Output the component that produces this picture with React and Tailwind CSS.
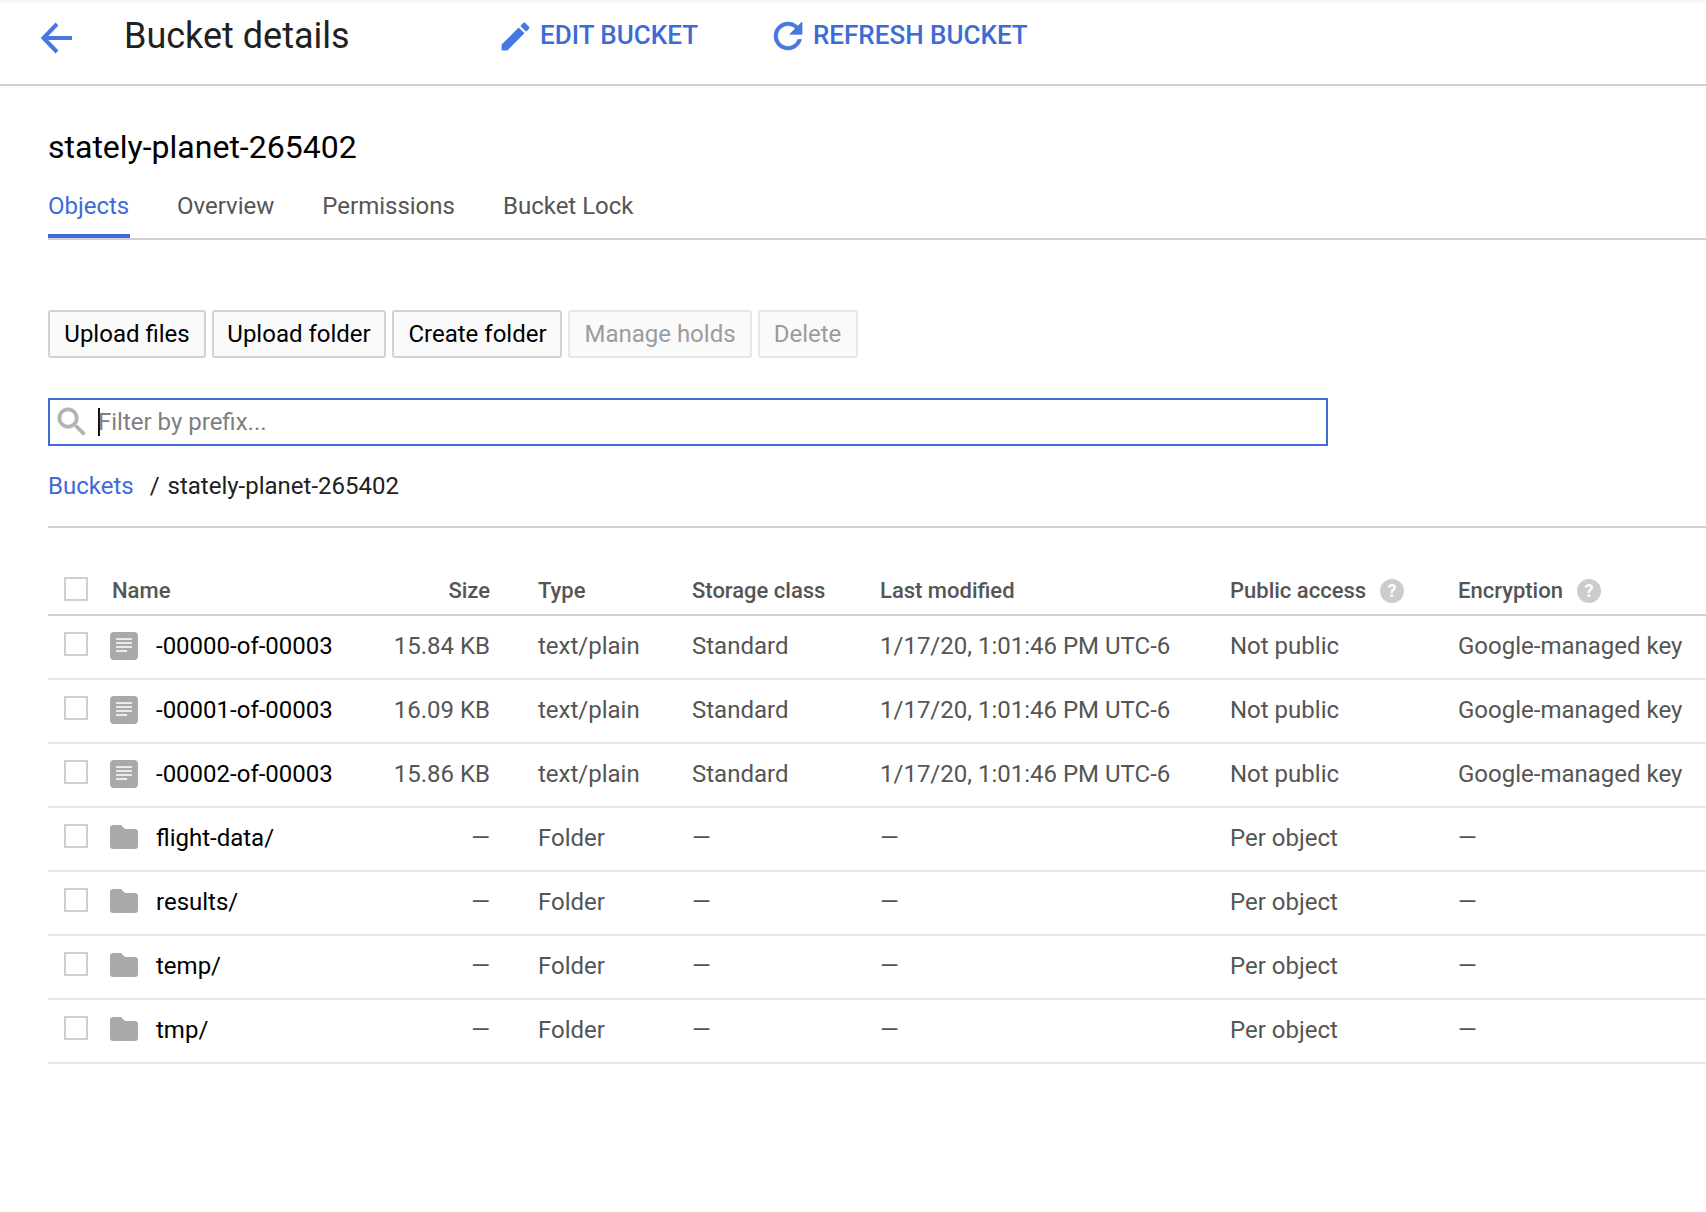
import React from "react";

const Pencil = () => (
  <svg viewBox="0 0 24 24" className="w-[37px] h-[37px] shrink-0" fill="#4678e0">
    <path d="M3 17.25V21h3.75L17.81 9.94l-3.75-3.75L3 17.25zM20.71 7.04a1 1 0 0 0 0-1.41l-2.34-2.34a1 1 0 0 0-1.41 0l-1.83 1.83 3.75 3.75 1.83-1.83z" />
  </svg>
);
const Refresh = () => (
  <svg viewBox="0 0 24 24" className="w-[42px] h-[42px] shrink-0" fill="#4678e0" stroke="#4678e0" strokeWidth="0.4">
    <path d="M17.65 6.35A7.95 7.95 0 0 0 12 4a8 8 0 1 0 7.73 10h-2.08A6 6 0 1 1 12 6c1.66 0 3.14.69 4.22 1.78L13 11h7V4l-2.35 2.35z" />
  </svg>
);
const Back = () => (
  <svg viewBox="0 0 34 34" className="w-[34px] h-[34px] mt-[4px] shrink-0" fill="none" stroke="#4678e0" strokeWidth="4">
    <path d="M32 17H4M17 3 3.5 17 17 31" />
  </svg>
);
const Search = () => (
  <svg viewBox="0 0 24 24" className="w-[38px] h-[38px] shrink-0" fill="#b2b2b2" stroke="#b2b2b2" strokeWidth="0.4">
    <path d="M15.5 14h-.79l-.28-.27A6.47 6.47 0 0 0 16 9.5 6.5 6.5 0 1 0 9.5 16c1.61 0 3.09-.59 4.23-1.57l.27.28v.79l5 4.99L20.49 19l-4.99-5zm-6 0A4.5 4.5 0 1 1 14 9.5 4.49 4.49 0 0 1 9.5 14z" />
  </svg>
);
const FileIcon = () => (
  <svg viewBox="0 0 28 28" className="w-[28px] h-[28px] block">
    <rect width="28" height="28" rx="4" fill="#a9a9a9" />
    <path d="M6 7h16M6 11h16M6 15h16M6 19h11" stroke="#fff" strokeWidth="1.5" />
  </svg>
);
const FolderIcon = () => (
  <svg viewBox="0 0 28 24" className="w-[28px] h-[24px] block -mt-[2px]">
    <path d="M3 0h8l4 4h10a3 3 0 0 1 3 3v14a3 3 0 0 1-3 3H3a3 3 0 0 1-3-3V3a3 3 0 0 1 3-3z" fill="#a9a9a9" />
  </svg>
);
const Help = () => (
  <span className="ml-[14px] w-[24px] h-[24px] rounded-full bg-[#cccccc] text-white text-[18px] font-bold leading-[24px] text-center inline-block">?</span>
);
const Check = () => <span className="block w-[24px] h-[24px] border-2 border-[#d0d0d0] bg-white" />;

const cols = "grid grid-cols-[62px_260px_120px_202px_188px_350px_228px_1fr]";

const files = [
  ["-00000-of-00003", "15.84 KB"],
  ["-00001-of-00003", "16.09 KB"],
  ["-00002-of-00003", "15.86 KB"],
];
const folders = ["flight-data/", "results/", "temp/", "tmp/"];

const Btn = ({ children, off, w }) => (
  <button
    className={`${w} h-[48px] border-2 rounded-[3px] bg-[#fafafa] ${off ? "border-[#e6e6e6] text-[#9c9c9c]" : "border-[#d2d2d2] text-black"}`}
  >
    {children}
  </button>
);

const Row = ({ icon, name, size, type, cls, mod, access, enc }) => (
  <div className={`${cols} h-[64px] pb-[2px] items-center border-b-2 border-[#e8e8e8] text-[#555]`}>
    <div className="pl-[16px] -mt-[4px]"><Check /></div>
    <div className="flex items-center text-black">
      <span className="w-[28px] flex justify-center">{icon}</span>
      <span className="ml-[18px]">{name}</span>
    </div>
    <div className="text-right">{size}</div>
    <div className="pl-[48px]">{type}</div>
    <div>{cls}</div>
    <div>{mod}</div>
    <div>{access}</div>
    <div className="whitespace-nowrap">{enc}</div>
  </div>
);

export default function App() {
  return (
    <div className="w-[1706px] h-[1212px] overflow-hidden bg-white font-['Roboto',sans-serif] text-[24px] text-black">
      <header className="h-[86px] flex items-center border-t-[3px] border-t-[#f8f8f8] border-b-2 border-b-[#d0d0d0] pl-[40px] pb-[15px]">
        <Back />
        <h1 className="ml-[50px] w-[373px] text-[36px] text-[#212121] leading-none">Bucket details</h1>
        <div className="flex items-center text-[#3d6bd6] font-medium text-[26px]">
          <Pencil />
          <span className="ml-[6px] -mt-[2px]">EDIT BUCKET</span>
        </div>
        <div className="flex items-center ml-[69px] text-[#3d6bd6] font-medium text-[26px]">
          <Refresh />
          <span className="ml-[4px] -mt-[2px]">REFRESH BUCKET</span>
        </div>
      </header>

      <main className="pl-[48px]">
        <h2 className="mt-[41px] text-[32px] leading-[40px]">stately-planet-265402</h2>

        <nav className="mt-[17px] h-[56px] flex gap-[48px] border-b-2 border-[#d0d0d0] text-[#555]">
          <span className="h-[54px] leading-[44px] border-b-4 border-[#3f6ad8] text-[#3f6ad8] w-[82px]">Objects</span>
          <span className="leading-[44px] -ml-[1px]">Overview</span>
          <span className="leading-[44px]">Permissions</span>
          <span className="leading-[44px]">Bucket Lock</span>
        </nav>

        <div className="mt-[70px] flex gap-[6px]">
          <Btn w="w-[158px]">Upload files</Btn>
          <Btn w="w-[174px]">Upload folder</Btn>
          <Btn w="w-[170px] pl-[1px]">Create folder</Btn>
          <Btn off w="w-[184px]">Manage holds</Btn>
          <Btn off w="w-[100px] pr-[1px]">Delete</Btn>
        </div>

        <div className="mt-[40px] w-[1280px] h-[48px] border-2 border-[#3f6ad8] flex items-center pl-[3px]">
          <Search />
          <span className="ml-[7px] h-[28px] w-[2px] bg-[#111]" />
          <span className="text-[#808080] -ml-[2px]">Filter by prefix...</span>
        </div>

        <div className="mt-[24px] h-[32px] leading-[32px] text-[#212121]">
          <span className="text-[#3f6ad8]">Buckets</span>
          <span className="ml-[16px]">/</span>
          <span className="ml-[8px]">stately-planet-265402</span>
        </div>

        <div className="mt-[24px] border-t-2 border-[#d0d0d0]" />

        <div className={`${cols} mt-[46px] h-[42px] pb-[8px] items-center border-b-2 border-[#d0d0d0] text-[#555] font-medium text-[22px]`}>
          <div className="pl-[16px] -mt-[4px]"><Check /></div>
          <div className="pl-[2px]">Name</div>
          <div className="text-right">Size</div>
          <div className="pl-[48px]">Type</div>
          <div>Storage class</div>
          <div>Last modified</div>
          <div className="flex items-center">Public access<Help /></div>
          <div className="flex items-center">Encryption<Help /></div>
        </div>

        {files.map(([n, s]) => (
          <Row key={n} icon={<FileIcon />} name={n} size={s} type="text/plain" cls="Standard" mod="1/17/20, 1:01:46 PM UTC-6" access="Not public" enc="Google-managed key" />
        ))}
        {folders.map((n) => (
          <Row key={n} icon={<FolderIcon />} name={n} size="—" type="Folder" cls="—" mod="—" access="Per object" enc="—" />
        ))}
      </main>
    </div>
  );
}
